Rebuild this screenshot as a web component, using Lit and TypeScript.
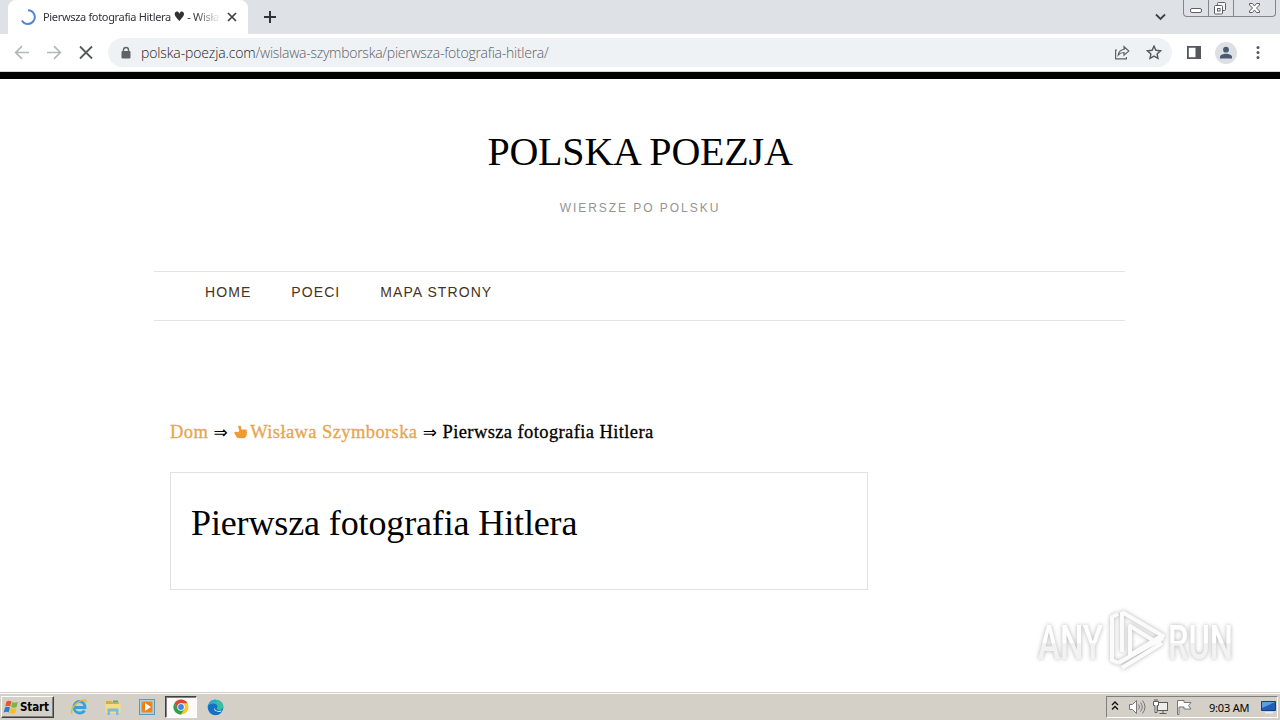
import {LitElement, html, css, svg} from 'lit';
import {customElement, property} from 'lit/decorators.js';

@customElement('browser-bar')
export class BrowserBar extends LitElement {
    static styles = css`
      :host {
        display: block;
        font-family: "Open Sans", "Noto Sans", sans-serif;
      }
      svg {
        display: block;
        flex: none;
      }
      .tabs {
        display: flex;
        height: 34px;
        background: #dee1e6;
      }
      .tab {
        display: flex;
        align-items: center;
        box-sizing: border-box;
        width: 240px;
        height: 34px;
        margin-left: 8px;
        padding: 0 10px 0 12px;
        background: #fff;
        border-radius: 8px 8px 0 0;
      }
      .title {
        width: 177px;
        margin: 0 6px 0 7px;
        overflow: hidden;
        white-space: nowrap;
        font-family: "Noto Sans", sans-serif;
        font-size: 11px;
        line-height: 16px;
        letter-spacing: -0.33px;
        color: #303236;
        mask-image: linear-gradient(90deg, #000 152px, transparent 178px);
      }
      .heart {
        font-family: "DejaVu Sans", sans-serif;
        font-size: 13px;
        line-height: 1;
      }
      .plus {
        margin: 11px 0 0 16px;
      }
      .chevron {
        margin: 13px 17px 0 auto;
      }
      .buttons {
        display: flex;
        box-sizing: border-box;
        width: 93px;
        height: 17px;
        margin-right: 4px;
        border: 1px solid #82868d;
        border-top: none;
        border-radius: 0 0 4px 4px;
      }
      .toolbar {
        display: flex;
        align-items: center;
        box-sizing: border-box;
        height: 38px;
        padding: 0 14px 0 14px;
        background: #fff;
        border-bottom: 1px solid #d4d6d9;
      }
      .nav {
        display: flex;
        gap: 16px;
      }
      .address {
        display: flex;
        align-items: center;
        box-sizing: border-box;
        width: 1064px;
        height: 29px;
        margin-left: 14px;
        padding: 0 10px 0 12px;
        border-radius: 15px;
        background: #eff2f5;
      }
      .url {
        flex: 1;
        margin-left: 9px;
        font-size: 14px;
        font-weight: 300;
        letter-spacing: -0.26px;
        white-space: nowrap;
        color: #5c6065;
      }
      .host {
        color: #1c1e21;
        letter-spacing: -0.13px;
      }
      .share {
        margin-right: 16px;
      }
      .panel {
        margin-left: 14px;
      }
      .avatar {
        margin: 0 13px 0 13px;
      }
    `;

    render() {
        return html`
            <div class="tabs">
                <div class="tab">
                    <svg width="16" height="16" viewBox="0 0 16 16" fill="none" stroke="#5585d6" stroke-width="2">
                        <path d="M8 1.2A6.9 6.9 0 1 1 1.9 11.5"/>
                    </svg>
                    <div class="title">Pierwsza fotografia Hitlera <span class="heart">♥</span> - Wisława</div>
                    <svg width="12" height="12" viewBox="0 0 12 12" stroke="#3c4043" stroke-width="1.7">
                        <path d="M2 2l8 8M10 2l-8 8"/>
                    </svg>
                </div>
                <svg class="plus" width="12" height="12" viewBox="0 0 12 12" stroke="#303338" stroke-width="2">
                    <path d="M6 0v12M0 6h12"/>
                </svg>
                <svg class="chevron" width="11" height="8" viewBox="0 0 11 8" fill="none" stroke="#3c4043" stroke-width="1.8">
                    <path d="M1 1.5l4.5 4.5L10 1.5"/>
                </svg>
                <div class="buttons">
                    <svg width="91" height="16" viewBox="0 0 91 16" fill="none" stroke="#5b5f66">
                        <path stroke="#82868d" d="M24.5 0v16M49.5 0v16"/>
                        <rect x="6.5" y="8.5" width="11" height="4" rx="1.5" fill="#fff"/>
                        <rect x="33.5" y="2.5" width="8" height="8" rx="1" fill="#f4f5f7"/>
                        <rect x="30.5" y="5.5" width="8" height="8.5" rx="1" fill="#fff"/>
                        <rect x="33.5" y="8.5" width="2.5" height="2.5"/>
                        <path fill="#fff" d="M65.5 3.5h3l2 2.5 2-2.5h3v1.5l-3 3 3 3v1.5h-3l-2-2.5-2 2.5h-3V11l3-3-3-3z"/>
                    </svg>
                </div>
            </div>
            <div class="toolbar">
                <div class="nav">
                    <svg width="16" height="16" viewBox="0 0 16 16" fill="none" stroke="#b4b6b9" stroke-width="1.7">
                        <path d="M15 7.5H2M8 1.2L1.7 7.5 8 13.8"/>
                    </svg>
                    <svg width="16" height="16" viewBox="0 0 16 16" fill="none" stroke="#b4b6b9" stroke-width="1.7">
                        <path d="M1 7.5h13M8 1.2l6.3 6.3L8 13.8"/>
                    </svg>
                    <svg width="16" height="16" viewBox="0 0 16 16" stroke="#55595e" stroke-width="1.8">
                        <path d="M2 1.5l12 12M14 1.5L2 13.5"/>
                    </svg>
                </div>
                <div class="address">
                    <svg width="12" height="14" viewBox="0 0 12 14">
                        <path d="M3.5 6V4a2.5 2.5 0 0 1 5 0v2" fill="none" stroke="#5f6368" stroke-width="1.4"/>
                        <rect x="1.5" y="5" width="9" height="7.5" rx="1" fill="#5f6368"/>
                    </svg>
                    <div class="url"><span class="host">polska-poezja.com</span>/wislawa-szymborska/pierwsza-fotografia-hitlera/</div>
                    <svg class="share" width="16" height="16" viewBox="0 0 16 16" fill="none" stroke="#5f6368" stroke-width="1.2">
                        <path d="M3 5H1.6v8.9h10.8V12"/>
                        <path d="M4.2 10c.5-3.5 2.500-5.300 5.800-5.500V1.700L14.800 6 10 10.200V7.500c-2.600 0-4.300.7-5.800 2.500z"/>
                    </svg>
                    <svg width="16" height="16" viewBox="0 0 16 16" fill="none" stroke="#55595e" stroke-width="1.4">
                        <path d="M8 1.1l1.900 4.200 4.600.5-3.400 3.100.9 4.500L8 11.100l-4 2.300.9-4.500-3.400-3.100 4.600-.5z"/>
                    </svg>
                </div>
                <svg class="panel" width="16" height="16" viewBox="0 0 16 16">
                    <path fill="#55575d" fill-rule="evenodd" d="M1 1h14v13H1zM2.8 2.8v9.4h6.700V2.800z"/>
                </svg>
                <svg class="avatar" width="22" height="22" viewBox="0 0 22 22" fill="#4c5973">
                    <circle cx="11" cy="11" r="11" fill="#dce0e5"/>
                    <circle cx="11" cy="7.7" r="2.9"/>
                    <path d="M5 16.5v-1.7c0-2 3.5-3.1 6-3.1s6 1.1 6 3.1v1.7z"/>
                </svg>
                <svg width="16" height="16" viewBox="0 0 16 16" fill="#55595e">
                    <circle cx="8" cy="2.5" r="1.5"/>
                    <circle cx="8" cy="7.5" r="1.5"/>
                    <circle cx="8" cy="12.5" r="1.5"/>
                </svg>
            </div>
        `;
    }
}

@customElement('poetry-page')
export class PoetryPage extends LitElement {
    @property() poem = 'Pierwsza fotografia Hitlera';

    static styles = css`
      :host {
        display: block;
        border-top: 7px solid #000;
        background: #fff;
        color: #000;
        font-family: "Liberation Serif", serif;
      }
      .site-title {
        margin: 50px 0 0;
        text-align: center;
        font-size: 40px;
        line-height: 46px;
        font-weight: 400;
        letter-spacing: -0.2px;
      }
      .tagline {
        margin: 25px 0 0;
        text-align: center;
        font-family: "Liberation Sans", sans-serif;
        font-size: 12px;
        line-height: 16px;
        letter-spacing: 1.95px;
        color: #949494;
      }
      .menu {
        display: flex;
        gap: 40px;
        box-sizing: border-box;
        width: 971px;
        height: 50px;
        margin: 55px 0 0 154px;
        padding: 11px 0 0 51px;
        border-top: 1px solid #e4e4e4;
        border-bottom: 1px solid #e4e4e4;
        font-family: "Liberation Sans", sans-serif;
        font-size: 14px;
        line-height: 18px;
        letter-spacing: 1.08px;
        color: #453421;
      }
      .crumbs {
        display: flex;
        align-items: center;
        height: 24px;
        margin: 99px 0 0 170px;
        font-size: 18.5px;
        line-height: 24px;
        letter-spacing: 0.4px;
        white-space: nowrap;
        -webkit-text-stroke: 0.3px currentColor;
      }
      .link {
        color: #e6a64a;
      }
      .arrow {
        width: 25px;
        text-align: center;
        font-family: "DejaVu Sans", sans-serif;
        font-size: 17px;
        letter-spacing: 0;
        -webkit-text-stroke: 0;
      }
      .thumb {
        margin: 0 2px 0 1px;
      }
      .card {
        box-sizing: border-box;
        width: 698px;
        height: 118px;
        margin: 28px 0 0 170px;
        padding: 29px 20px;
        border: 1px solid #e2e2e2;
      }
      .card h1 {
        margin: 0;
        font-size: 36px;
        line-height: 42px;
        font-weight: 400;
        letter-spacing: -0.13px;
      }
    `;

    render() {
        return html`
            <h2 class="site-title">POLSKA POEZJA</h2>
            <p class="tagline">WIERSZE PO POLSKU</p>
            <nav class="menu">
                <span>HOME</span>
                <span>POECI</span>
                <span>MAPA STRONY</span>
            </nav>
            <div class="crumbs">
                <span class="link">Dom</span>
                <span class="arrow">⇒</span>
                <svg class="thumb" width="14" height="14" viewBox="0 0 14 14" fill="#ee9b35">
                    <path d="M5 .8c1.200-.5 2 .2 2.100 1.300l.2 2.300h4.500c1.300 0 1.500 1.500.5 1.900 1.200.4 1.100 1.700.2 2 .8.600.6 1.700-.2 2 .4.900-.1 1.700-.9 1.800-.2.800-.9 1.200-1.900 1.200H5.500C3.500 13.300 2.600 12.300 2 11L.5 8.400C0 7.200.8 6.500 1.900 6.700l2.600.5.8-2L4.300 2.500C4 1.700 4.300 1.100 5 .8z"/>
                </svg>
                <span class="link">Wisława Szymborska</span>
                <span class="arrow">⇒</span>
                <span>${this.poem}</span>
            </div>
            <div class="card"><h1>${this.poem}</h1></div>
        `;
    }
}

@customElement('task-bar')
export class TaskBar extends LitElement {
    static styles = css`
      :host {
        display: flex;
        align-items: center;
        box-sizing: border-box;
        height: 28px;
        padding: 1px 2px 0 1px;
        border-top: 1px solid #d4d0c8;
        background: #d4d0c8;
        box-shadow: inset 0 1px #fff;
        font-family: "DejaVu Sans Condensed", "DejaVu Sans", sans-serif;
        color: #000;
      }
      svg {
        display: block;
        flex: none;
      }
      .start {
        display: flex;
        align-items: center;
        box-sizing: border-box;
        width: 53px;
        height: 22px;
        padding-left: 1px;
        border: 1px solid;
        border-color: #fff #404040 #404040 #fff;
        box-shadow: inset -1px -1px #808080;
        font-size: 11.5px;
        font-weight: 700;
        letter-spacing: -0.1px;
      }
      .apps {
        display: flex;
        align-items: center;
        margin-left: 8px;
      }
      .app {
        display: flex;
        align-items: center;
        justify-content: center;
        width: 34px;
        height: 22px;
      }
      .app.active {
        box-sizing: border-box;
        width: 32px;
        margin: 0 1px;
        border: 1px solid;
        border-color: #404040 #fff #fff #404040;
        box-shadow: inset 1px 1px #808080;
        background: #fbfaf9;
      }
      .tray {
        display: flex;
        align-items: center;
        box-sizing: border-box;
        width: 172px;
        height: 22px;
        margin-left: auto;
        padding-left: 4px;
        border: 1px solid;
        border-color: #808080 #fff #fff #808080;
      }
      .time {
        width: 43px;
        margin: 0 9px 0 10px;
        font-family: "Noto Sans", sans-serif;
        font-size: 11px;
        letter-spacing: -0.2px;
        white-space: nowrap;
      }
    `;

    render() {
        return html`
            <div class="start">
                <svg width="17" height="17" viewBox="0 0 17 17">
                    <path fill="#e8552d" d="M3.5 2.5c2-1.3 3.6-1 5 0L7.2 7.6c-1.5-1-3-1-5 0z"/>
                    <path fill="#78b63c" d="M9.4 3c1.7 1 3.5 1 5.6-.2L13.6 8c-2 1.1-3.8 1.1-5.5 0z"/>
                    <path fill="#3478c8" d="M2 8.5c1.9-1.1 3.5-1 5 0l-1.3 5c-1.6-1-3.1-1-5 0z"/>
                    <path fill="#f6bd24" d="M7.9 9c1.7 1 3.4 1 5.5 0L12 14c-2 1.1-3.7 1.1-5.4 0z"/>
                </svg>
                Start
            </div>
            <div class="apps">
                <div class="app">
                    <svg width="18" height="18" viewBox="0 0 18 18" fill="none">
                        <path stroke="#38a2de" stroke-width="2.8" d="M4.5 9.5H15c0-3.6-2.3-6-5.6-6-3.2 0-5.4 2.5-5.4 5.7 0 3.3 2.2 5.8 5.5 5.8 2.3 0 4-1 5-2.6"/>
                        <path stroke="#e6b82e" stroke-width="1.4" d="M2.2 15.5C-.5 12 6 4 12 2.3c3-1 4.8-.2 4 2.2"/>
                    </svg>
                </div>
                <div class="app">
                    <svg width="18" height="18" viewBox="0 0 18 18">
                        <path fill="#d7ac48" d="M2 3h5l1.5 1.5H15V15H2z"/>
                        <path fill="#f6dc83" d="M1.5 6h15v9h-15z"/>
                        <path fill="#5fae61" d="M9 2.5h5v2H9z"/>
                        <path fill="#7bbbe2" d="M3.5 10.5h11V17H12v-3.5H6V17H3.5z"/>
                    </svg>
                </div>
                <div class="app">
                    <svg width="18" height="18" viewBox="0 0 18 18">
                        <rect x="1.5" y="1.5" width="15" height="15" fill="#a9d4ee" stroke="#4f9bc9"/>
                        <rect x="3.5" y="3.5" width="11" height="11" fill="#f18a1c"/>
                        <circle cx="9" cy="9" r="4.7" fill="#ee7d12"/>
                        <path fill="#fff" d="M7 5l6 4-6 4z"/>
                    </svg>
                </div>
                <div class="app active">
                    <svg width="16" height="16" viewBox="0 0 16 16">
                        <circle cx="8" cy="8" r="7.5" fill="#f8c92b"/>
                        <path fill="#e04436" d="M1.5 4.25A7.5 7.5 0 0 1 14.5 4.25H8L4.75 9.9z"/>
                        <path fill="#2f9e51" d="M1.5 4.25A7.5 7.5 0 0 0 8 15.5l3.25-5.6H4.75z"/>
                        <circle cx="8" cy="8" r="3.7" fill="#fff"/>
                        <circle cx="8" cy="8" r="2.9" fill="#4285e8"/>
                    </svg>
                </div>
                <div class="app">
                    <svg width="17" height="17" viewBox="0 0 17 17">
                        <circle cx="8.5" cy="8.5" r="7.8" fill="#1470c2"/>
                        <path fill="#38bfa0" d="M1 7C2 2.5 5 .7 8.7.7c4.5 0 7.6 3 7.6 6.5 0 2.5-2 3.7-4 3.7-1.8 0-2.5-.7-2.5-1.3s.7-.8.7-2C10.5 5.5 8 4.3 5.5 4.5 3.5 4.6 2 5.5 1 7z"/>
                        <path fill="#30a4dc" d="M1 7C2 2.5 5 .7 8.7.7L10 3.5C6 3 2.5 4 1 7z"/>
                        <path fill="#d4eaf2" d="M7.3 8.5c0 2.6 3.5 4.5 7.5 2.8l-1 1.4c-4 1-7.5-1-6.5-4.2z"/>
                    </svg>
                </div>
            </div>
            <div class="tray">
                <svg width="8" height="12" viewBox="0 0 8 12" fill="none" stroke="#111" stroke-width="1.4">
                    <path d="M1 4l3-3 3 3M1 8.5l3-3 3 3"/>
                </svg>
                <svg width="80" height="18" viewBox="0 0 80 18" fill="none" stroke="#77777a">
                    <path fill="#fff" d="M10.5 6.5h3l4-4v13l-4-4h-3z"/>
                    <path d="M19.5 6.5q2 2.5 0 5M21.5 4.5q3.5 4.5 0 9M23.5 2.5q5 6.5 0 13"/>
                    <g stroke="#5c5c5c">
                        <rect x="38.5" y="4.5" width="10" height="8" fill="#eee"/>
                        <path fill="#fff" d="M34.5 3.5h5v4h-1.500v7h-2v-7h-1.500zM36 1v2M38 1v2M40.500 15.500h7M44 13v2"/>
                    </g>
                    <path fill="#fff" d="M58.500 2.500h6.500v2h7l-2.500 3 2.500 3.500h-7V9h-5v7.500h-1.500z"/>
                </svg>
                <div class="time">9:03 AM</div>
                <svg width="16" height="14" viewBox="0 0 16 14">
                    <path fill="#205fb5" stroke="#123f82" d="M.5 1.5h14v9H.5z"/>
                    <path fill="#5c9ee2" d="M1 2h13L1 8z"/>
                    <path fill="#e9eef4" d="M4 12h8v1.5H4z"/>
                </svg>
            </div>
        `;
    }
}

const watermark = svg`
    <defs>
        <linearGradient id="fade" x1="0" y1="0" x2="0" y2="1">
            <stop offset="0.5" stop-color="#fff"/>
            <stop offset="0.52" stop-color="#f2f2f2"/>
        </linearGradient>
    </defs>
    <g class="word">
        <text x="18" y="64" textLength="65" lengthAdjust="spacingAndGlyphs">ANY</text>
        <text x="148" y="64" textLength="65" lengthAdjust="spacingAndGlyphs">RUN</text>
    </g>
    <g class="mark">
        <path d="M98 19l-6 3v43l6 3M102 17v40M102 17l41 24-7 6-26-16v29l33-20M98 68l45-25M102 73l40-25"/>
    </g>
`;

@customElement('app-root')
export class AppRoot extends LitElement {
    static styles = css`
      :host {
        display: flex;
        flex-direction: column;
        position: relative;
        width: 1280px;
        height: 720px;
        overflow: hidden;
        background: #fff;
      }
      poetry-page {
        flex: 1;
      }
      .watermark {
        position: absolute;
        left: 1020px;
        top: 595px;
        overflow: visible;
        filter: drop-shadow(0 0 2px rgba(0, 0, 0, 0.3));
      }
      .word {
        font-family: Roboto, sans-serif;
        font-size: 48px;
        font-weight: 500;
        fill: url(#fade);
      }
      .mark {
        fill: none;
        stroke: #fbfbfb;
        stroke-width: 4;
        stroke-linejoin: round;
      }
    `;

    render() {
        return html`
            <browser-bar></browser-bar>
            <poetry-page></poetry-page>
            <task-bar></task-bar>
            <svg class="watermark" width="240" height="90" viewBox="0 0 240 90">${watermark}</svg>
        `;
    }
}
